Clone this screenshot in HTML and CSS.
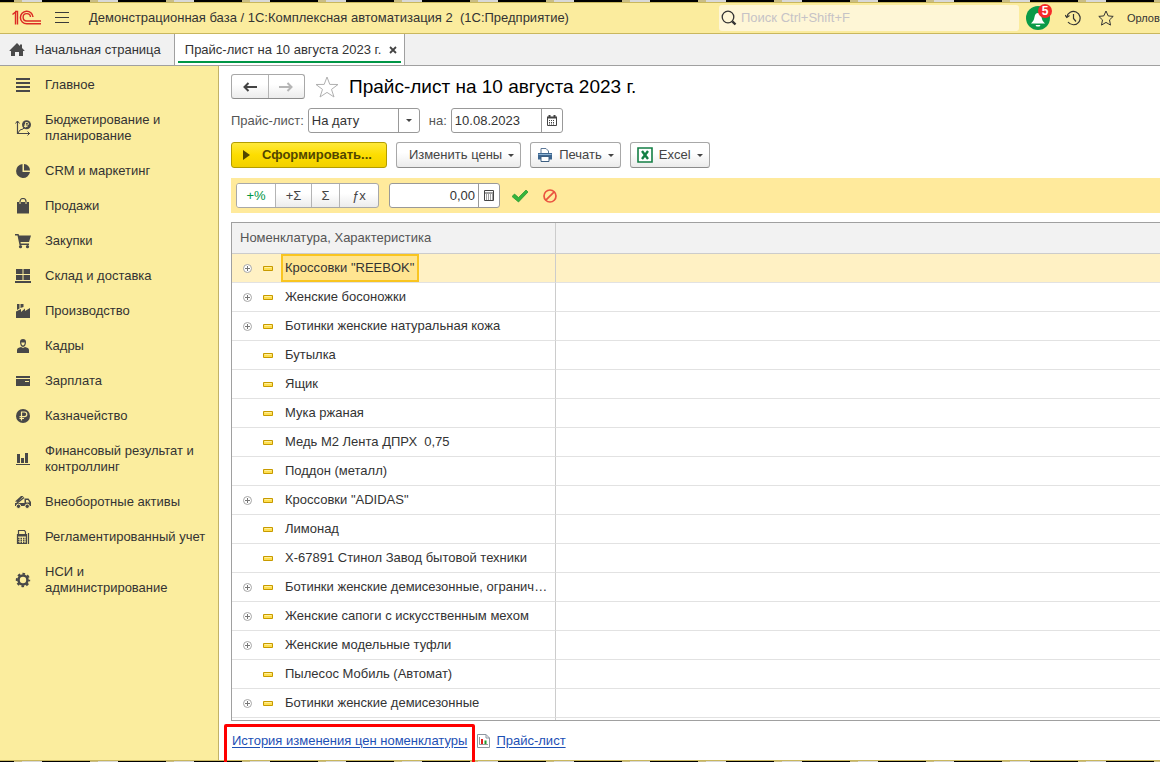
FILE: index.html
```html
<!DOCTYPE html>
<html lang="ru">
<head>
<meta charset="utf-8">
<title>Прайс-лист на 10 августа 2023 г.</title>
<link rel="stylesheet" href="styles.css">
</head>
<body>
<div class="desktop-edge"></div>
<header class="topbar">
  <svg class="logo" width="30" height="16" viewBox="0 0 30 16" fill="none" stroke="#dc2a24"><path d="M.5 4.500L3.500 2v12.500M3 1.500h2.500v13" stroke-width="1.400"/><path d="M21 7A6.300 6.300 0 1 0 14.700 13.800H29" stroke-width="1.500"/><path d="M18.500 7A3.700 3.700 0 1 0 14.800 11H29" stroke-width="1.400"/></svg>
  <button class="icon-btn menu" aria-label="Меню"><svg width="16" height="12" viewBox="0 0 16 12" stroke="#3a3a3a"><path d="M1 .5h14M1 5.500h14M1 10.500h14"/></svg></button>
  <h1 class="app-title">Демонстрационная база / 1С:Комплексная автоматизация 2&nbsp; (1С:Предприятие)</h1>
  <label class="search">
    <svg width="16" height="16" viewBox="0 0 16 16" fill="none" stroke="#333"><circle cx="7" cy="7" r="5.800" stroke-width="1.300"/><path d="M11.300 11.300L14.500 14.500" stroke-width="2.400"/></svg>
    <input type="search" placeholder="Поиск Ctrl+Shift+F" aria-label="Поиск">
  </label>
  <button class="icon-btn bell" aria-label="Уведомления">
    <svg width="24" height="24" viewBox="0 0 24 24"><circle cx="12" cy="12" r="12" fill="#0a9a48"/><path d="M5 17.500c2-2 3-3.500 3.500-6.500 .5-2.500 1.500-4 3.500-4s3 1.500 3.500 4c.5 3 1.500 4.500 3.500 6.500zM9.500 19h5l-1 1.500h-3z" fill="#fff"/></svg>
    <span class="badge">5</span>
  </button>
  <button class="icon-btn history" aria-label="История"><svg width="16" height="16" viewBox="0 0 16 16" fill="none" stroke="#333"><path d="M1.800 7A6.700 6.700 0 1 1 3 12" stroke-width="1.200"/><path d="M0 5l1.800 2.500L4.500 5.500M8.500 4v4.500l2.500 3" stroke-width="1.200"/></svg></button>
  <button class="icon-btn" aria-label="Избранное"><svg width="16" height="16" viewBox="0 0 16 16" fill="none" stroke="#333"><path d="M8 1l2.200 4.900 5 .5-3.700 3.500 1 5.200L8 12.400 3.500 15.100l1-5.200L.8 6.400l5-.5z"/></svg></button>
  <span class="user">Орлов</span>
</header>

<nav class="tabs">
  <a class="tab home" href="#"><svg width="16" height="14" viewBox="0 0 16 14" fill="#4a4a4a"><path d="M8 0L.5 7.500V8H2v5h4V9h4v4h4V8h1.500v-.5L13 5V1.500h-2V3z"/></svg>Начальная страница</a>
  <div class="tab active"><a href="#">Прайс-лист на 10 августа 2023 г.</a><button class="icon-btn" aria-label="Закрыть"><svg width="8" height="8" viewBox="0 0 8 8" stroke="#444" stroke-width="1.800"><path d="M1 1l6 6M7 1L1 7"/></svg></button></div>
</nav>

<div class="workspace">
  <nav class="sidebar">
    <a href="#"><svg width="16" height="16" viewBox="0 0 16 16" fill="#484848"><path d="M1 1h14v2H1zM1 5h14v2H1zM1 9h14v2H1zM1 13h14v2H1z"/></svg>Главное</a>
    <a href="#"><svg width="16" height="16" viewBox="0 0 16 16" fill="none" stroke="#484848"><path d="M2.500 1v12.500H15" stroke-width="1.200"/><path d="M.5 3.500l2-2.500 2 2.500M12.500 11.500l2 2-2 2M3 13l2-3 3-1 2-2"/><circle cx="11.500" cy="4.700" r="4.500" fill="#484848" stroke="none"/><path d="M10.500 7.500V2.500h1.700a1.300 1.300 0 0 1 0 2.600H9M9 6.500h3.500" stroke="#fbed9e" stroke-width=".9"/></svg>Бюджетирование и планирование</a>
    <a href="#"><svg width="16" height="16" viewBox="0 0 16 16" fill="#484848"><path d="M7.500 1A7 7 0 1 0 15 9H7.500z"/><path d="M9 1v6.500h6A6.500 6.500 0 0 0 9 1z"/></svg>CRM и маркетинг</a>
    <a href="#"><svg width="16" height="16" viewBox="0 0 16 16"><path d="M2 4h12v11.500H2z" fill="#484848"/><path d="M5 6V3.500a3 3 0 0 1 6 0V6" fill="none" stroke="#fbed9e" stroke-width="1"/><path d="M5 4V3.500a3 3 0 0 1 6 0V4" fill="none" stroke="#484848" stroke-width="1.200"/></svg>Продажи</a>
    <a href="#"><svg width="16" height="16" viewBox="0 0 16 16" fill="#484848"><path d="M0 1h3.500l.7 1.500H16L14 9H5.500l.3 1.500H14V12H4.500L2.500 2.500H0z"/><circle cx="5.500" cy="13.700" r="1.600"/><circle cx="12.500" cy="13.700" r="1.600"/></svg>Закупки</a>
    <a href="#"><svg width="16" height="16" viewBox="0 0 16 16" fill="#484848"><path d="M1 1h6.500v5H1zM8.500 1H15v5H8.500zM1 7h6.500v5H1zM8.500 7H15v5H8.500zM0 13h16v2H0z"/></svg>Склад и доставка</a>
    <a href="#"><svg width="16" height="16" viewBox="0 0 16 16" fill="#484848"><path d="M1 15V8.500L6 6v3l4-3.500V8l5-3v10zM2 1h2.500v4.500L2 7zM5.500 1H8.500v3L5.500 5z"/></svg>Производство</a>
    <a href="#"><svg width="16" height="16" viewBox="0 0 16 16" fill="#484848"><path d="M5 4a3 3 0 0 1 6 0c0 2.500-1 5-3 5S5 6.500 5 4zM2 15v-3c0-2 2-2.500 4-3l2 1 2-1c2 .5 4 1 4 3v3z"/><path d="M6.200 4.500C6.500 6.500 7 7.500 8 7.500s1.500-1 1.800-3z" fill="#fbed9e"/></svg>Кадры</a>
    <a href="#"><svg width="16" height="16" viewBox="0 0 16 16" fill="#484848"><path d="M1 3h14v2H1zM1 6h14v7H1z"/><path d="M10 8.500h4" stroke="#fbed9e"/></svg>Зарплата</a>
    <a href="#"><svg width="16" height="16" viewBox="0 0 16 16"><circle cx="8" cy="8" r="7" fill="#484848"/><path d="M6.500 12.500V4h3a2.300 2.300 0 0 1 0 4.600H4.500M4.500 10.500H9" fill="none" stroke="#fbed9e" stroke-width="1.200"/></svg>Казначейство</a>
    <a href="#"><svg width="16" height="16" viewBox="0 0 16 16" fill="#484848"><path d="M2 3h3v9H2zM6 7h3v5H6zM10 2h3v10h-3zM1 13h14v1H1z"/></svg>Финансовый результат и контроллинг</a>
    <a href="#"><svg width="16" height="16" viewBox="0 0 16 16"><path d="M0 7.500L6 2h2.500L3 8z" fill="#484848"/><path d="M1.500 9.500L9 3.500" stroke="#484848" stroke-width="1.400"/><path d="M0 9h9.500V4.500h4L16 8v4H0z" fill="#484848"/><path d="M11 6v2.500h3.500L13 6z" fill="#fbed9e"/><g fill="#484848" stroke="#fbed9e"><circle cx="3.500" cy="12.300" r="2.200"/><circle cx="12.200" cy="12.300" r="2.200"/></g></svg>Внеоборотные активы</a>
    <a href="#"><svg width="16" height="16" viewBox="0 0 16 16" fill="none" stroke="#484848"><path d="M3.500 5V1.500h6L10.500 3v2M2.500 5.500h9v9h-9zM13.500 4v11" stroke-width="1.200"/><path d="M2 6.500h10" stroke-width="2"/><path d="M3 9.500h8.500M3 11.500h8.500M3 13.500h8.500" stroke-dasharray="1.500 1" stroke-width="1.300"/></svg>Регламентированный учет</a>
    <a href="#"><svg width="16" height="16" viewBox="0 0 16 16" fill="none" stroke="#484848"><circle cx="8" cy="8" r="4.500" stroke-width="2.600"/><circle cx="8" cy="8" r="6.200" stroke-width="2" stroke-dasharray="2.600 2.270" stroke-dashoffset="1.300"/></svg>НСИ и администрирование</a>
  </nav>

  <main class="content">
    <div class="title-row">
      <div class="group nav-group">
        <button aria-label="Назад"><svg width="14" height="10" viewBox="0 0 14 10" stroke="#444" fill="none" stroke-width="2"><path d="M1.500 5H14M5.500 1L1.500 5l4 4"/></svg></button>
        <button aria-label="Вперед"><svg width="14" height="10" viewBox="0 0 14 10" stroke="#b5b5b5" fill="none" stroke-width="2"><path d="M0 5h12.500M8.500 1l4 4-4 4"/></svg></button>
      </div>
      <button class="icon-btn" aria-label="В избранное"><svg width="24" height="22" viewBox="0 0 24 22" fill="none" stroke="#b0b0b0"><path d="M12 1l2.800 7.400 8.200.1-6.500 4.900L19 21l-7-4.600L5 21l2.500-7.600L1 8.500l8.200-.1z"/></svg></button>
      <h2>Прайс-лист на 10 августа 2023 г.</h2>
    </div>

    <div class="filter-row">
      <label for="kind">Прайс-лист:</label>
      <div class="field">
        <select id="kind"><option>На дату</option></select>
        <span class="field-btn"><svg width="6" height="3" viewBox="0 0 6 3" fill="#444"><path d="M0 0h6L3 3z"/></svg></span>
      </div>
      <label for="date">на:</label>
      <div class="field">
        <input id="date" type="text" value="10.08.2023">
        <button class="field-btn" aria-label="Календарь"><svg width="10" height="11" viewBox="0 0 10 11" fill="none" stroke="#444"><path d="M.5 2.500h9v8h-9z"/><path d="M0 2.500h10M2.500 0v2M7.500 0v2" stroke-width="2"/><path d="M2 5.500h6M2 7.500h6M2 9h6" stroke-dasharray="1 1"/></svg></button>
      </div>
    </div>

    <div class="actions">
      <button class="btn primary"><svg width="7" height="10" viewBox="0 0 7 10" fill="#514600"><path d="M0 0l7 5-7 5z"/></svg>Сформировать...</button>
      <button class="btn change">Изменить цены<svg class="caret" width="6" height="3" viewBox="0 0 6 3"><path d="M0 0h6L3 3z"/></svg></button>
      <button class="btn"><svg width="16" height="14" viewBox="0 0 16 14"><path d="M4 5V.5h5L11.500 3v2" fill="#fff" stroke="#5d7898"/><path d="M1 5h14v6.500H1z" fill="#3d6690"/><path d="M1.500 6.500h13" stroke="#8db2d3"/><path d="M4 8.500h8v5H4z" fill="#fff" stroke="#3d5f82"/></svg>Печать<svg class="caret" width="6" height="3" viewBox="0 0 6 3"><path d="M0 0h6L3 3z"/></svg></button>
      <button class="btn"><svg width="16" height="16" viewBox="0 0 16 16"><path d="M1 1h14v14H1z" fill="#fff" stroke="#147f45" stroke-width="1.600"/><path d="M5 4l6 8M11 4l-6 8" stroke="#147f45" stroke-width="2.400"/></svg>Excel<svg class="caret" width="6" height="3" viewBox="0 0 6 3"><path d="M0 0h6L3 3z"/></svg></button>
    </div>

    <div class="calc-bar">
      <div class="group calc-group">
        <button class="percent">+%</button><button>+Σ</button><button>Σ</button><button>ƒx</button>
      </div>
      <div class="field amount">
        <input type="text" value="0,00" aria-label="Значение">
        <button class="field-btn" aria-label="Калькулятор"><svg width="10" height="11" viewBox="0 0 10 11" fill="none" stroke="#444"><path d="M.5.5h9v10h-9zM1 3h8"/><path d="M2 5h7M2 7h7M2 9h7" stroke-dasharray="1 1"/></svg></button>
      </div>
      <button class="icon-btn" aria-label="Применить"><svg width="16" height="14" viewBox="0 0 16 14"><path d="M0 7.500L2.500 5l4 3.500L14 1l2 2L6.500 13z" fill="#35b53c" stroke="#23912b" stroke-width=".7"/></svg></button>
      <button class="icon-btn" aria-label="Отменить"><svg width="14" height="14" viewBox="0 0 14 14" fill="none" stroke="#ea5340" stroke-width="1.700"><circle cx="7" cy="7" r="6"/><path d="M2.800 11.200l8.400-8.400"/></svg></button>
    </div>

    <svg class="defs" width="0" height="0" aria-hidden="true">
      <symbol id="plus" viewBox="0 0 9 9"><circle cx="4.500" cy="4.500" r="4" fill="#fff" stroke="#a6a6a6"/><path d="M2 4.500h5M4.500 2v5" stroke="#777"/></symbol>
      <symbol id="item" viewBox="0 0 10 5"><path d="M.5.500h9v4h-9z" fill="#ffdf50" stroke="#c79a00"/><path d="M1.500 1.500h7" stroke="#fff0a0"/></symbol>
    </svg>
    <div class="table-wrap">
      <table>
        <thead><tr><th>Номенклатура, Характеристика</th><th></th></tr></thead>
        <tbody>
          <tr class="selected"><td><div class="cell"><svg class="plus"><use href="#plus"/></svg><svg class="mark"><use href="#item"/></svg><span>Кроссовки "REEBOK"</span></div></td><td></td></tr>
          <tr><td><div class="cell"><svg class="plus"><use href="#plus"/></svg><svg class="mark"><use href="#item"/></svg><span>Женские босоножки</span></div></td><td></td></tr>
          <tr><td><div class="cell"><svg class="plus"><use href="#plus"/></svg><svg class="mark"><use href="#item"/></svg><span>Ботинки женские натуральная кожа</span></div></td><td></td></tr>
          <tr><td><div class="cell"><svg class="plus"></svg><svg class="mark"><use href="#item"/></svg><span>Бутылка</span></div></td><td></td></tr>
          <tr><td><div class="cell"><svg class="plus"></svg><svg class="mark"><use href="#item"/></svg><span>Ящик</span></div></td><td></td></tr>
          <tr><td><div class="cell"><svg class="plus"></svg><svg class="mark"><use href="#item"/></svg><span>Мука ржаная</span></div></td><td></td></tr>
          <tr><td><div class="cell"><svg class="plus"></svg><svg class="mark"><use href="#item"/></svg><span>Медь М2 Лента ДПРХ&nbsp; 0,75</span></div></td><td></td></tr>
          <tr><td><div class="cell"><svg class="plus"></svg><svg class="mark"><use href="#item"/></svg><span>Поддон (металл)</span></div></td><td></td></tr>
          <tr><td><div class="cell"><svg class="plus"><use href="#plus"/></svg><svg class="mark"><use href="#item"/></svg><span>Кроссовки "ADIDAS"</span></div></td><td></td></tr>
          <tr><td><div class="cell"><svg class="plus"></svg><svg class="mark"><use href="#item"/></svg><span>Лимонад</span></div></td><td></td></tr>
          <tr><td><div class="cell"><svg class="plus"></svg><svg class="mark"><use href="#item"/></svg><span>Х-67891 Стинол Завод бытовой техники</span></div></td><td></td></tr>
          <tr><td><div class="cell"><svg class="plus"><use href="#plus"/></svg><svg class="mark"><use href="#item"/></svg><span>Ботинки женские демисезонные, огранич…</span></div></td><td></td></tr>
          <tr><td><div class="cell"><svg class="plus"><use href="#plus"/></svg><svg class="mark"><use href="#item"/></svg><span>Женские сапоги с искусственным мехом</span></div></td><td></td></tr>
          <tr><td><div class="cell"><svg class="plus"><use href="#plus"/></svg><svg class="mark"><use href="#item"/></svg><span>Женские модельные туфли</span></div></td><td></td></tr>
          <tr><td><div class="cell"><svg class="plus"></svg><svg class="mark"><use href="#item"/></svg><span>Пылесос Мобиль (Автомат)</span></div></td><td></td></tr>
          <tr><td><div class="cell"><svg class="plus"><use href="#plus"/></svg><svg class="mark"><use href="#item"/></svg><span>Ботинки женские демисезонные</span></div></td><td></td></tr>
        </tbody>
      </table>
    </div>

    <footer class="links">
      <div class="highlighted"><a href="#">История изменения цен номенклатуры</a></div>
      <svg width="13" height="14" viewBox="0 0 13 14"><path d="M.5.500H9L12.500 4v9.500H.5z" fill="#fff" stroke="#8c96a0"/><path d="M9 .5V4h3.500" fill="none" stroke="#8c96a0"/><path d="M2.500 3v7.500H11" fill="none" stroke="#999"/><path d="M4 5h2v5H4z" fill="#e02020"/><path d="M7.500 6.500h2V10h-2z" fill="#1f9b2b"/></svg>
      <a href="#">Прайс-лист</a>
    </footer>
  </main>
</div>
<div class="desktop-edge bottom"></div>
</body>
</html>
```

FILE: styles.css
```css
* { box-sizing: border-box; }

body {
  margin: 0;
  min-height: 100vh;
  display: flex;
  flex-direction: column;
  overflow-x: hidden;
  background: #fff;
  color: #333;
  font: 13px/16px "Liberation Sans", Arial, sans-serif;
}

button, input, select { font: inherit; color: inherit; }
button { cursor: pointer; }
svg { flex: none; display: block; }
a { color: inherit; text-decoration: none; }

.desktop-edge {
  flex: none;
  height: 2px;
  background: repeating-linear-gradient(90deg, #000 0 14px, #c9bd86 14px 22px, #d8d8d8 22px 42px, #000 42px 76px);
}
.desktop-edge.bottom { height: 1px; }

.topbar {
  flex: none;
  display: flex;
  align-items: center;
  height: 32px;
  padding-left: 12px;
  background: #fbec9e;
  border-top: 1px solid #c9b75e;
  border-bottom: 1px solid #c9b75e;
  white-space: nowrap;
  overflow: hidden;
}
.icon-btn {
  display: flex;
  flex: none;
  padding: 0;
  border: 0;
  background: none;
}
.menu { margin: 0 19px 0 12px; }
.app-title { margin: 0; font-size: 13px; font-weight: normal; }

.search {
  display: flex;
  align-items: center;
  gap: 4px;
  width: 300px;
  height: 26px;
  margin-left: auto;
  padding-left: 2px;
  border-radius: 3px;
  background: #fef6d6;
}
.search input {
  flex: 1;
  min-width: 0;
  padding: 0;
  border: 0;
  background: none;
  outline: none;
}
.search input::placeholder { color: #c6c3c6; opacity: 1; }

.bell { position: relative; margin: 0 15px 0 7px; }
.badge {
  position: absolute;
  top: -2px;
  right: -2px;
  width: 14px;
  height: 14px;
  border-radius: 50%;
  background: #f52a2a;
  color: #fff;
  font-size: 12px;
  line-height: 14px;
  font-weight: bold;
  text-align: center;
}
.history { margin-right: 17px; }
.user { width: 33px; margin-left: 13px; font-size: 11px; }

.tabs {
  flex: none;
  display: flex;
  height: 32px;
  background: #f1f1f1;
  border-bottom: 1px solid #a0a0a0;
}
.tab { display: flex; align-items: center; white-space: nowrap; }
.home { gap: 10px; padding: 0 13px 0 9px; border-right: 1px solid #a0a0a0; }
.active {
  gap: 8px;
  padding: 0 7px 0 10px;
  background: linear-gradient(#009646, #009646) 3px 27px / calc(100% - 6px) 2px no-repeat #fff;
  border-right: 1px solid #a0a0a0;
}

.workspace { flex: 1; display: flex; border-bottom: 1px solid #c9b75e; }

.sidebar {
  flex: none;
  width: 219px;
  padding-top: 1px;
  background: #fbed9e;
  border-right: 1px solid #c2b267;
}
.sidebar a {
  display: flex;
  align-items: center;
  gap: 14px;
  padding: 10px 12px 9px 15px;
}

.content {
  flex: 1;
  min-width: 0;
  display: flex;
  flex-direction: column;
  padding: 8px 0 0 12px;
}

.title-row { display: flex; align-items: center; gap: 10px; height: 25px; }
.title-row h2 { margin: 0; color: #000; font-size: 19px; line-height: 24px; font-weight: normal; white-space: nowrap; }

.group {
  display: flex;
  border: 1px solid #a8a8a8;
  border-radius: 3px;
  background: linear-gradient(#fff 40%, #ececec);
  overflow: hidden;
}
.group button {
  display: flex;
  align-items: center;
  justify-content: center;
  padding: 0;
  border: 0;
  background: none;
}
.group button + button { border-left: 1px solid #b4b4b4; }
.nav-group { width: 74px; height: 25px; border-bottom-color: #8c8c8c; }
.nav-group button { flex: 1; }

.filter-row { display: flex; align-items: center; margin-top: 9px; color: #555; }
.filter-row label { margin-right: 4px; }
.field + label { margin-left: 9px; }
.field {
  display: flex;
  width: 112px;
  height: 25px;
  border: 1px solid #999;
  border-radius: 3px;
  background: #fff;
  color: #333;
}
.field input, .field select {
  flex: 1;
  min-width: 0;
  padding: 0 3px;
  border: 0;
  background: none;
  outline: none;
  appearance: none;
}
.field-btn {
  display: flex;
  align-items: center;
  justify-content: center;
  width: 21px;
  padding: 0;
  border: 0;
  border-left: 1px solid #999;
  background: none;
}

.actions { display: flex; gap: 9px; margin-top: 9px; }
.btn {
  display: flex;
  align-items: center;
  gap: 6px;
  height: 26px;
  padding: 0 6px;
  border: 1px solid #a8a8a8;
  border-bottom-color: #8c8c8c;
  border-radius: 3px;
  background: linear-gradient(#fff 40%, #ebebeb);
  color: #444;
  white-space: nowrap;
}
.btn.change { padding-left: 12px; }
.btn.primary {
  gap: 12px;
  padding: 0 14px 0 11px;
  border-color: #b39d00;
  background: linear-gradient(#ffe93a, #fddd00 50%, #f2d000);
  color: #514600;
  font-weight: bold;
}
.caret { fill: #444; }

.calc-bar {
  display: flex;
  align-items: center;
  height: 35px;
  margin-top: 10px;
  padding-left: 5px;
  background: #ffea9c;
}
.calc-group { width: 143px; height: 25px; margin-right: 10px; color: #444; }
.calc-group button { width: 36px; }
.calc-group .percent { width: 38px; color: #009646; background: #fff; }
.calc-group button:nth-child(3) { width: 28px; }
.calc-group button:last-child { flex: 1; }
.amount { width: 111px; margin-right: 12px; }
.amount input { text-align: right; }
.calc-bar > .icon-btn { margin-right: 15px; }

.defs { position: absolute; }
.table-wrap {
  margin-top: 9px;
  padding-bottom: 2px;
  border: solid #a0a0a0;
  border-width: 1px 0 1px 1px;
  background: linear-gradient(#ccc, #ccc) 323px 0 / 1px 100% no-repeat;
}
table { width: 100%; border-collapse: separate; border-spacing: 0; table-layout: fixed; }
th, td { padding: 0; border-bottom: 1px solid #e2e2e2; text-align: left; }
th:first-child, td:first-child { width: 324px; border-right: 1px solid #ccc; }
th {
  height: 31px;
  padding-left: 8px;
  border-bottom-color: #ccc;
  background: #f2f2f2;
  color: #555;
  font-weight: normal;
}
.cell { display: flex; align-items: center; height: 28px; padding-left: 11px; white-space: nowrap; }
.plus { width: 9px; height: 9px; margin-right: 11px; }
.mark { width: 10px; height: 5px; margin-right: 8px; }
.cell span { padding: 0 4px; }
.selected td { background: #fff1c4; }
.cell span { border: 0 solid #f9c520; }
.selected .cell span {
  align-self: stretch;
  padding: 4px 3px 4px 2px;
  border-width: 2px;
  background: #ffe591;
}

.links { display: flex; align-items: center; height: 39px; color: #1d50b5; white-space: nowrap; }
.links a { text-decoration: underline; text-underline-offset: 2px; }
.links > svg { margin: 0 6px 0 10px; }
.highlighted { position: relative; padding-left: 1px; }
.highlighted::after {
  content: "";
  position: absolute;
  inset: -9px -8px -14px -7px;
  border: 3px solid #f00;
  border-bottom-width: 1px;
  border-radius: 2px;
  pointer-events: none;
}
```
